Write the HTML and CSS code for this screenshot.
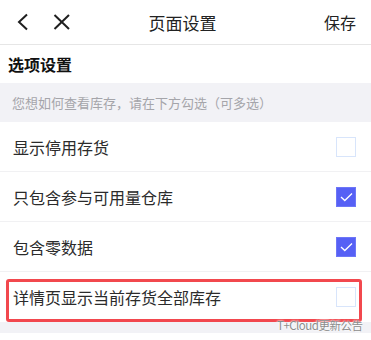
FILE: index.html
```html
<!DOCTYPE html>
<html>
<head>
  <meta charset="utf-8">
  <title>页面设置</title>
  <link rel="stylesheet" href="styles.css">
</head>
<body>
  <header class="topbar">
    <div class="nav-icons">
      <svg class="icon" width="16" height="20" viewBox="0 0 16 20">
        <polyline points="11,2.5 3,10 11,17.5" fill="none" stroke="#1f1f1f" stroke-width="2"/>
      </svg>
      <svg class="icon" width="18" height="20" viewBox="0 0 18 20">
        <line x1="1.5" y1="3" x2="16" y2="17" stroke="#1f1f1f" stroke-width="2"/>
        <line x1="16" y1="3" x2="1.5" y2="17" stroke="#1f1f1f" stroke-width="2"/>
      </svg>
    </div>
    <div class="title">页面设置</div>
    <div class="save">保存</div>
  </header>

  <div class="section-title">选项设置</div>
  <div class="hint">您想如何查看库存，请在下方勾选（可多选）</div>

  <div class="option">
    <span>显示停用存货</span>
    <span class="check"></span>
  </div>
  <div class="option">
    <span>只包含参与可用量仓库</span>
    <span class="check on">
      <svg width="13" height="10" viewBox="0 0 13 10"><polyline points="1,5 4.8,8.5 12,1.5" fill="none" stroke="#fff" stroke-width="1.3"/></svg>
    </span>
  </div>
  <div class="option">
    <span>包含零数据</span>
    <span class="check on">
      <svg width="13" height="10" viewBox="0 0 13 10"><polyline points="1,5 4.8,8.5 12,1.5" fill="none" stroke="#fff" stroke-width="1.3"/></svg>
    </span>
  </div>
  <div class="option last marked">
    <span>详情页显示当前存货全部库存</span>
    <span class="check"></span>
  </div>

  <div class="bottom-band"></div>

  <div class="watermark">T+Cloud更新公告</div>
</body>
</html>
```

FILE: styles.css
```css
body {
  margin: 0;
  background: #fff;
  font-family: "Noto Sans CJK SC", "Noto Sans", sans-serif;
  color: #262626;
  position: relative;
  min-height: 340px;
}

.topbar {
  height: 44px;
  border-bottom: 1px solid #e6e6e6;
  display: grid;
  grid-template-columns: 1fr auto 1fr;
  align-items: center;
}

.nav-icons {
  display: flex;
  align-items: center;
  gap: 21px;
  padding-left: 16px;
}

.icon {
  display: block;
}

.title {
  font-size: 17px;
  color: #222;
  margin-left: -6px;
}

.save {
  justify-self: end;
  padding-right: 15px;
  font-size: 16px;
  color: #222;
}

.section-title {
  height: 38px;
  display: flex;
  align-items: center;
  padding-left: 8px;
  font-size: 16px;
  font-weight: bold;
  color: #111;
}

.hint {
  height: 39px;
  display: flex;
  align-items: center;
  padding-left: 12px;
  background: #f2f2f6;
  font-size: 13px;
  color: #a5a5aa;
}

.option {
  height: 49px;
  border-bottom: 1px solid #f1f1f3;
  display: flex;
  align-items: center;
  justify-content: space-between;
  padding: 0 15px 0 13px;
  font-size: 16px;
  color: #2b2b2b;
}

.option.last {
  height: 50px;
  border-bottom: none;
}

.marked {
  position: relative;
}

.marked::after {
  content: "";
  position: absolute;
  top: 7px;
  left: 6px;
  right: 9px;
  bottom: 0;
  border: 3px solid #f2484e;
  border-radius: 3px;
}

.check {
  width: 18px;
  height: 18px;
  border: 1.5px solid #d8e5fb;
  display: flex;
  align-items: center;
  justify-content: center;
}

.check.on {
  background: #5660f5;
  border-color: #6d76f7;
}

.bottom-band {
  height: 11px;
  background: #f2f2f6;
}

.watermark {
  position: absolute;
  left: 277px;
  top: 317px;
  font-size: 11.5px;
  letter-spacing: -0.5px;
  white-space: nowrap;
  color: #8c8c8c;
  text-shadow: 0 0 2px #fff, 0 0 2px #fff;
}
```
